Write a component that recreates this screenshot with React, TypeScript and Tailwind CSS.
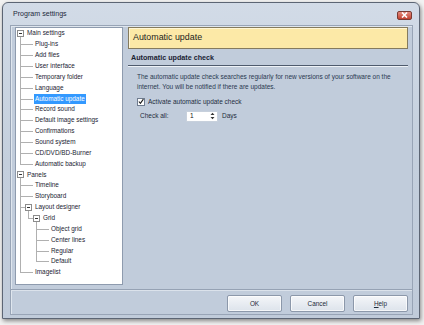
import React from "react";

type Node = { d: number; label: string; box?: boolean; sel?: boolean };

const rows: Node[] = [
  { d: 0, label: "Main settings", box: true },
  { d: 1, label: "Plug-ins" },
  { d: 1, label: "Add files" },
  { d: 1, label: "User interface" },
  { d: 1, label: "Temporary folder" },
  { d: 1, label: "Language" },
  { d: 1, label: "Automatic update", sel: true },
  { d: 1, label: "Record sound" },
  { d: 1, label: "Default image settings" },
  { d: 1, label: "Confirmations" },
  { d: 1, label: "Sound system" },
  { d: 1, label: "CD/DVD/BD-Burner" },
  { d: 1, label: "Automatic backup" },
  { d: 0, label: "Panels", box: true },
  { d: 1, label: "Timeline" },
  { d: 1, label: "Storyboard" },
  { d: 1, label: "Layout designer", box: true },
  { d: 2, label: "Grid", box: true },
  { d: 3, label: "Object grid" },
  { d: 3, label: "Center lines" },
  { d: 3, label: "Regular" },
  { d: 3, label: "Default" },
  { d: 1, label: "Imagelist" },
];

function continues(i: number, k: number) {
  for (let j = i + 1; j < rows.length; j++) {
    if (rows[j].d <= k + 1) return rows[j].d === k + 1;
  }
  return false;
}

function TreeRow({ n, i }: { n: Node; i: number }) {
  const cols = [];
  for (let k = 0; k < n.d; k++) {
    const direct = k === n.d - 1;
    const full = continues(i, k);
    cols.push(
      <div key={k} className="relative w-[8px] h-full shrink-0">
        {(full || direct) && (
          <span
            className={`absolute left-[3px] top-0 w-px bg-[#b0b0b0] ${full ? "h-full" : "h-1/2"}`}
          />
        )}
        {direct && <span className="absolute left-[3px] right-0 top-1/2 h-px bg-[#b0b0b0]" />}
      </div>
    );
  }
  return (
    <div className="flex items-center h-[10.86px]">
      {cols}
      <div className="relative w-[8px] h-full shrink-0">
        {n.box ? (
          <>
            {n.d > 0 && <span className="absolute left-0 w-px top-1/2 h-px bg-[#b0b0b0]" />}
            <span className="absolute left-[3px] top-1/2 bottom-0 w-px bg-[#b0b0b0]" />
            <span className="absolute left-0 top-[2px] w-[7px] h-[7px] border border-[#8c8c8c] bg-white flex items-center justify-center">
              <span className="w-[3px] h-px bg-[#333]" />
            </span>
          </>
        ) : (
          <span className="absolute left-0 right-0 top-1/2 h-px bg-[#b0b0b0]" />
        )}
      </div>
      <span
        className={`ml-[1px] px-[1px] leading-[10px] h-[10px] whitespace-nowrap ${
          n.sel ? "bg-[#3399ff] text-white" : "text-[#1b2433]"
        }`}
      >
        {n.label}
      </span>
    </div>
  );
}

function Btn({ children }: { children: React.ReactNode }) {
  return (
    <div className="w-[55px] h-[17px] rounded-[2px] border border-[#8c98aa] bg-gradient-to-b from-[#f4f6f9] to-[#dde3eb] flex items-center justify-center text-[#1e2a3a] shadow-[inset_0_0_0_1px_rgba(255,255,255,0.7)]">
      {children}
    </div>
  );
}

export default function App() {
  return (
    <div className="w-[424px] h-[325px] bg-[#f2f2f2] overflow-hidden font-['Liberation_Sans',sans-serif] text-[6.4px]">
      <div className="ml-[2px] mt-[2px] w-[418px] h-[317px] rounded-t-[6px] border border-[#5c6574] bg-gradient-to-b from-[#d2dbe7] via-[#c4cfdd] to-[#c0cbda] shadow-[1px_2px_4px_rgba(0,0,0,0.45)] flex flex-col">
        <div className="h-[22px] flex items-center justify-between pl-[10px] pr-[7px] shrink-0">
          <span className="text-[7.1px] text-[#1d2a3b]">Program settings</span>
          <div className="w-[15px] h-[9px] mt-[2px] rounded-[2px] border border-[#7a3a32] bg-gradient-to-b from-[#e48a7e] to-[#c2402f] flex items-center justify-center">
            <svg width="7" height="6" viewBox="0 0 7 6">
              <path d="M1 0.5 L6 5.5 M6 0.5 L1 5.5" stroke="#fff" strokeWidth="1.6" />
            </svg>
          </div>
        </div>
        <div className="ml-[7px] mr-[6px] border border-[#98a4b6] bg-[#c1ccdb] flex flex-col shadow-[inset_1px_1px_0_#dfe6ee]">
          <div className="flex pl-[4px] pr-[4px] pt-[1px] gap-[5px]">
            <div className="w-[108px] h-[258px] shrink-0 bg-white border border-[#8e9bae] pl-[1px] pt-0">
              {rows.map((n, i) => (
                <TreeRow key={i} n={n} i={i} />
              ))}
            </div>
            <div className="flex-1 flex flex-col">
              <div className="h-[22px] border border-[#857b5e] bg-[#fce9a7] shadow-[inset_1px_1px_0_#fff6d6] flex items-center pl-[4px] text-[8.9px] text-[#1d1d1d]">
                Automatic update
              </div>
              <div className="mt-[4px] pl-[3px] font-bold text-[7.2px] text-[#1a2333] leading-[10px]">
                Automatic update check
              </div>
              <div className="mt-[2px] h-px bg-[#4f5b6d] border-b border-[#eef2f7] box-content" />
              <div className="mt-[5px] pl-[9px] leading-[10px] text-[#2a3950] text-[6.5px]">
                The automatic update check searches regularly for new versions of your software on the
                <br />
                internet. You will be notified if there are updates.
              </div>
              <div className="mt-[5px] pl-[9px] flex items-center gap-[3px] text-[#1f2c40] text-[6.5px]">
                <div className="w-[8px] h-[8px] border border-[#6f7c8f] bg-white flex items-center justify-center">
                  <svg width="7" height="7" viewBox="0 0 7 7">
                    <path d="M1 3.5 L2.8 5.6 L6.3 0.8" stroke="#1a1a1a" strokeWidth="1.3" fill="none" />
                  </svg>
                </div>
                <span>Activate automatic update check</span>
              </div>
              <div className="mt-[4px] pl-[12px] flex items-center text-[#1f2c40] text-[6.5px]">
                <span className="w-[46px]">Check all:</span>
                <div className="w-[32px] h-[11px] bg-white border border-[#c7d0dc] flex items-center justify-between pl-[3px] pr-[2px]">
                  <span className="text-[#111]">1</span>
                  <svg width="5" height="8" viewBox="0 0 5 8">
                    <path d="M0.5 3 L2.5 0.8 L4.5 3 Z M0.5 5 L2.5 7.2 L4.5 5 Z" fill="#333" />
                  </svg>
                </div>
                <span className="ml-[4px]">Days</span>
              </div>
            </div>
          </div>
          <div className="mt-[4px] h-px bg-[#96a2b4] border-b border-[#dbe2eb] box-content" />
          <div className="flex justify-end gap-[8px] pr-[4px] pt-[4px] pb-[2px]">
            <Btn>OK</Btn>
            <Btn>Cancel</Btn>
            <Btn>
              <span>
                <span className="underline">H</span>elp
              </span>
            </Btn>
          </div>
        </div>
      </div>
    </div>
  );
}
